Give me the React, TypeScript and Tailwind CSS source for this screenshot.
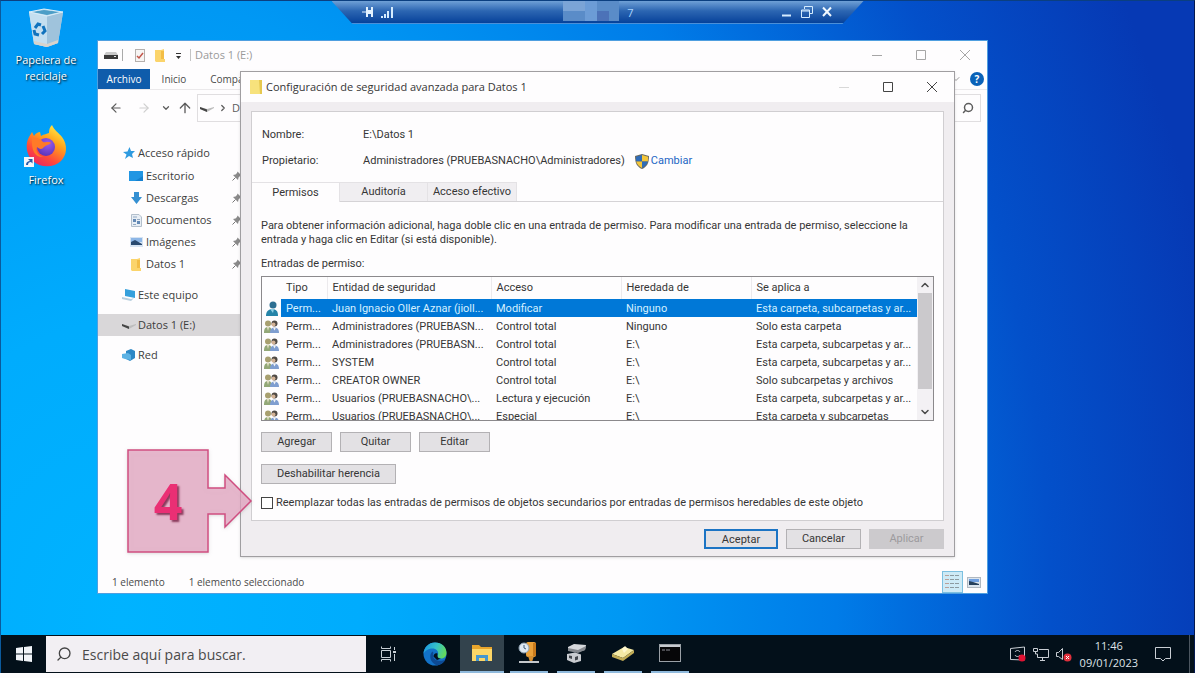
import type { ReactNode } from 'react';
import clsx from 'clsx';
import {
  ArrowLeft,
  ArrowRight,
  ArrowUp,
  ChevronDown,
  ChevronRight,
  ChevronUp,
  Search,
} from 'lucide-react';

const permissions = [
  { who: 'Juan Ignacio Oller Aznar (jioll...', access: 'Modificar', from: 'Ninguno', scope: 'Esta carpeta, subcarpetas y ar...', single: true },
  { who: 'Administradores (PRUEBASN...', access: 'Control total', from: 'Ninguno', scope: 'Solo esta carpeta' },
  { who: 'Administradores (PRUEBASN...', access: 'Control total', from: 'E:\\', scope: 'Esta carpeta, subcarpetas y ar...' },
  { who: 'SYSTEM', access: 'Control total', from: 'E:\\', scope: 'Esta carpeta, subcarpetas y ar...' },
  { who: 'CREATOR OWNER', access: 'Control total', from: 'E:\\', scope: 'Solo subcarpetas y archivos' },
  { who: 'Usuarios (PRUEBASNACHO\\...', access: 'Lectura y ejecución', from: 'E:\\', scope: 'Esta carpeta, subcarpetas y ar...' },
  { who: 'Usuarios (PRUEBASNACHO\\...', access: 'Especial', from: 'E:\\', scope: 'Esta carpeta y subcarpetas' },
];

/* ---------- Icons ---------- */

function RecycleBinIcon() {
  return (
    <svg width="38" height="40" viewBox="0 0 38 40">
      <path d="M2 4 L17 1 L36 4 L31 35 L20 39 L7 36 Z" fill="#b9d8ec" />
      <path d="M2 4 L20 8 L20 39 L7 36 Z" fill="#c4dff0" />
      <path d="M20 8 L36 4 L31 35 L20 39 Z" fill="#9fc3dc" />
      <path d="M7 33 L20 36 L31 32 L31 35 L20 39 L7 36 Z" fill="#d8d3cc" />
      <path d="M5 4 L17 2 L33 4 L20 7 Z" fill="#4c9ec7" />
      <path d="M2 4 L17 1 L36 4 L20 8 Z" fill="none" stroke="#d9edf8" />
      <g fill="none" stroke="#1173bd" strokeWidth="3">
        <path d="M8 20 L11 16 L14 17" />
        <path d="M16 18 L18 23 L15 26" />
        <path d="M12 27 L8 26 L7 22" />
      </g>
    </svg>
  );
}

function FirefoxIcon() {
  return (
    <svg width="44" height="44" viewBox="0 0 44 44">
      <defs>
        <linearGradient id="fox" x1="0.8" y1="0" x2="0.2" y2="1">
          <stop offset="0" stopColor="#fff04a" />
          <stop offset="0.35" stopColor="#ffa41c" />
          <stop offset="0.7" stopColor="#ff4a3a" />
          <stop offset="1" stopColor="#e8206a" />
        </linearGradient>
        <radialGradient id="globe" cx="0.6" cy="0.3" r="0.8">
          <stop offset="0" stopColor="#9a5cf0" />
          <stop offset="1" stopColor="#5430b4" />
        </radialGradient>
      </defs>
      <path
        d="M28 1 C30 6 35 9 38 13 C44 21 43 31 37 37 C30 44 16 44 9 37 C2 31 1 20 5 13 C6 11 7 10 8 8 L10 12 C12 9 14 8 16 8 L17 12 C20 10 23 10 25 9 C25 5 26 3 28 1 Z"
        fill="url(#fox)"
      />
      <circle cx="22" cy="23" r="9" fill="url(#globe)" />
      <path d="M8 14 C13 13 17 15 19 18 C22 19 25 17 27 19 C25 21 22 21 20 23 C18 26 15 25 13 23 C11 26 14 32 20 33 C12 34 7 28 8 14 Z" fill="#ff7a28" />
      <rect x="0" y="33" width="10" height="10" fill="#f4f6fa" />
      <path d="M2 41 C2 38 4 37 6 37 L4 35 L8.500 35 L8.500 39.500 L7 38 C5 38 4 39 4 41 Z" fill="#2a5ba8" />
    </svg>
  );
}

function DriveIcon() {
  return (
    <svg width="14" height="10" viewBox="0 0 14 10">
      <path d="M2 2 H12 L14 5 H0 Z" fill="#c9c9c9" />
      <rect y="5" width="14" height="4" fill="#3a3a3a" />
      <rect x="10" y="6" width="2" height="1" fill="#e8e8e8" />
    </svg>
  );
}

function SmallDriveIcon() {
  return (
    <svg width="14" height="8" viewBox="0 0 14 8">
      <path d="M0 3 L7 5 L14 3 L14 4 L7 8 L0 5 Z" fill="#bdbdbd" />
      <path d="M0 3 L7 5.500 L7 8 L0 5 Z" fill="#454545" />
    </svg>
  );
}

function FolderIcon({ className }: { className?: string }) {
  return (
    <svg width="10" height="13" viewBox="0 0 10 13" className={className}>
      <path d="M0 1 H6 L9 0 V10 H10 V13 H1 L0 12 Z" fill="#fbd46b" />
      <path d="M6 2 H9 V10 H6 Z" fill="#f3bd45" />
    </svg>
  );
}

function PinIcon() {
  return (
    <svg width="10" height="10" viewBox="0 0 10 10">
      <path d="M5.500 0.500 L9.500 4.500 L8 5 L6.500 6.500 L6 9 L1 4 L3.500 3.500 L5 2 Z" fill="#8a8a8a" />
      <path d="M3.500 6.500 L0.500 9.500" stroke="#777" />
    </svg>
  );
}

function UserIcon() {
  return (
    <svg width="12" height="15" viewBox="0 0 12 15">
      <circle cx="7" cy="4" r="3.500" fill="#2d6f92" />
      <path d="M0 15 C0 10 3 8 6 8 C10 8 12 10 12 15 Z" fill="#2584a8" />
      <path d="M4 8 L7 12 L8 8 Z" fill="#8fd0e6" />
    </svg>
  );
}

function GroupIcon() {
  return (
    <svg width="15" height="13" viewBox="0 0 15 13">
      <circle cx="4" cy="3.500" r="3" fill="#a8a070" />
      <path d="M0 13 C0 9 1 7 4 7 C7 7 8 9 8 13 Z" fill="#93a878" />
      <path d="M3 7 L4 11 L5 7 Z" fill="#efe6cf" />
      <circle cx="10.500" cy="3.500" r="3" fill="#4f4a45" />
      <circle cx="9.500" cy="4.500" r="2" fill="#d3b295" />
      <path d="M6 13 C6 9 8 7.500 10.500 7.500 C13 7.500 15 9 15 13 Z" fill="#7f9ed0" />
      <path d="M9 7.500 L10.500 10.500 L12 7.500 Z" fill="#f3f3f3" />
    </svg>
  );
}

function ShieldIcon() {
  return (
    <svg width="14" height="15" viewBox="0 0 14 15">
      <path d="M7 0 L14 2 C14 9 12 13 7 15 C2 13 0 9 0 2 Z" fill="#6a6a60" />
      <path d="M7 1 V7.500 H1.200 C1 6 1 4 1 2.800 Z" fill="#2f6cb8" />
      <path d="M7 1 L13 2.800 C13 4 13 6 12.800 7.500 H7 Z" fill="#f4c63a" />
      <path d="M1.200 7.500 H7 V14 C4 12.500 2 10.500 1.200 7.500 Z" fill="#f4c63a" />
      <path d="M7 7.500 H12.800 C12 10.500 10 12.500 7 14 Z" fill="#2f6cb8" />
    </svg>
  );
}

function EdgeIcon() {
  return (
    <svg width="24" height="24" viewBox="0 0 24 24">
      <defs>
        <linearGradient id="edgeTop" x1="0" y1="0.3" x2="1" y2="0.6">
          <stop offset="0" stopColor="#1c9ae0" />
          <stop offset="0.5" stopColor="#35c1c8" />
          <stop offset="1" stopColor="#66dc55" />
        </linearGradient>
      </defs>
      <circle cx="12" cy="12" r="11.500" fill="#1272c8" />
      <path d="M0.500 12 C1 5 6 0.500 12 0.500 C19 0.500 23.500 5 23.500 11 C23.500 15 20 17 17 16.500 C14 16 14 15 15 13 C16 9 13 6.500 9.500 6.500 C5 6.500 1.500 9 0.500 12 Z" fill="url(#edgeTop)" />
      <path d="M9.500 9.500 C6 12 6 20 13.500 23.300 C18 23 21 20.500 22.500 17.500 C18 20 11 19 10 14 C10 12 11 10 9.500 9.500 Z" fill="#0d4a94" />
      <path d="M14.500 11.500 C14 15 15 16.800 18 16.600 L14 18 L10.500 14.500 C10.500 12 12.500 10.500 14.500 11.500 Z" fill="#03111c" />
    </svg>
  );
}

function ExplorerIcon() {
  return (
    <svg width="22" height="18" viewBox="0 0 22 18">
      <path d="M1 1 H8 L10 3 H21 V17 H1 Z" fill="#e8a52c" />
      <path d="M1 5 H21 V17 H1 Z" fill="#fcd667" />
      <path d="M5 17 V11 H17 V17 H14 V14 H8 V17 Z" fill="#4597cf" />
    </svg>
  );
}

function DiskToolIcon() {
  return (
    <svg width="22" height="24" viewBox="0 0 22 24">
      <rect x="8" y="1" width="10" height="15" rx="2" fill="#eaa13a" />
      <rect x="15" y="2" width="3" height="13" fill="#c87a1c" />
      <path d="M10 15 H16 L14 21 H12 Z" fill="#d48e30" />
      <path d="M1 20 H21 V22 H1 Z" fill="#c4c8cc" />
      <circle cx="6" cy="7" r="5" fill="#dfe9f2" stroke="#8fa2b3" />
      <path d="M6 4 V7 L8 8" stroke="#3d5a78" fill="none" />
    </svg>
  );
}

function ServerIcon() {
  return (
    <svg width="22" height="20" viewBox="0 0 22 20">
      <path d="M3 4 L9 1 L21 2 L20 7 L13 9 L3 7 Z" fill="#d5d8dc" />
      <path d="M3 5 L13 7 L21 3 L20 7 L13 10 L3 8 Z" fill="#85898f" />
      <path d="M2 11 L10 9.500 L16 11.500 V18 L9 20 L2 17 Z" fill="#c9ccd1" />
      <path d="M4 12.500 L7 13 V16 L4 15 Z M10 14 L13 13 V16.500 L10 17.500 Z" fill="#42464c" />
    </svg>
  );
}

function BookIcon() {
  return (
    <svg width="24" height="16" viewBox="0 0 24 16">
      <path d="M1 9 L13 2 L23 5 L12 13 Z" fill="#f5eaa4" />
      <path d="M1 9 L12 13 L23 5 V8 L12 16 L1 12 Z" fill="#c2ad56" />
      <path d="M11 4 L14 1 L17 4 L13 8 Z" fill="#fff8cf" />
    </svg>
  );
}

function ConsoleIcon() {
  return (
    <svg width="22" height="18" viewBox="0 0 22 18">
      <rect x="0.500" y="0.500" width="21" height="17" fill="#060608" stroke="#9aa0a6" />
      <rect x="1" y="1" width="20" height="2" fill="#c6cacf" />
      <path d="M3 6 H6 M7 6 H11" stroke="#8d8d95" />
    </svg>
  );
}

function TaskViewIcon() {
  return (
    <svg width="17" height="16" viewBox="0 0 17 16" fill="none" stroke="#c9d0d6">
      <path d="M1.500 4.500 H10.500 V11.500 H1.500 Z M1.500 0.500 V2.500 H10.500 V0.500 M1.500 15.500 V13.500 H10.500 V15.500" />
      <path d="M14.500 1 V4 M14.500 8 V15" />
      <path d="M13 6 H16" strokeWidth="2" />
    </svg>
  );
}

/* ---------- Small building blocks ---------- */

function CaptionButtons({ active }: { active?: boolean }) {
  const stroke = active ? '#444' : '#a6a6a6';
  return (
    <div className="flex self-stretch">
      <button aria-label="Minimizar" className="flex w-11 items-center justify-center">
        <svg width="10" height="10" viewBox="0 0 10 10">
          <path d="M0 5.500 H10" stroke={active ? '#d8d8d8' : stroke} />
        </svg>
      </button>
      <button aria-label="Maximizar" className="flex w-11 items-center justify-center">
        <svg width="10" height="10" viewBox="0 0 10 10">
          <path d="M0.500 0.500 H9.500 V9.500 H0.500 Z" fill="none" stroke={stroke} />
        </svg>
      </button>
      <button aria-label="Cerrar" className="flex w-11 items-center justify-center">
        <svg width="10" height="10" viewBox="0 0 10 10">
          <path d="M0 0 L10 10 M10 0 L0 10" stroke={stroke} />
        </svg>
      </button>
    </div>
  );
}

function DialogButton({ children, className }: { children: ReactNode; className?: string }) {
  return (
    <button className={clsx('h-5 border border-[#b3b1b4] bg-[#e3e1e4] pt-px text-center', className)}>
      {children}
    </button>
  );
}

function NavItem({ icon, label, child, selected }: { icon: ReactNode; label: string; child?: boolean; selected?: boolean }) {
  return (
    <a
      href="#"
      className={clsx('flex h-[22px] items-center', child ? 'pl-7' : 'pl-[22px]', selected && 'bg-[#d9d7d9]')}
    >
      <span className={clsx('flex shrink-0 items-center justify-center', child ? 'w-[20px]' : 'w-[18px]')}>{icon}</span>
      <span className="flex-1 whitespace-nowrap">{label}</span>
      {child && <PinIcon />}
    </a>
  );
}

/* ---------- Remote desktop bar ---------- */

function ConnectionBar() {
  return (
    <div className="absolute top-0 left-1/2 flex h-[23px] w-[532px] -translate-x-1/2 items-center justify-between border-b border-[#4a8fd8] bg-linear-to-b from-[#6fa0d6] via-[#2c66b2] via-45% to-[#04419a] pr-[30px] pl-[30px] text-white [clip-path:polygon(0_0,100%_0,calc(100%-21px)_100%,21px_100%)]">
      <div className="flex w-[54px] items-center gap-2">
        <svg width="11" height="10" viewBox="0 0 11 10" fill="#e3f2ff">
          <path d="M0 4.500 H4 V5.500 H0 Z M4 0 H6 V3 H9 V0 H11 V10 H9 V7 H6 V10 H4 Z" />
        </svg>
        <svg width="13" height="11" viewBox="0 0 13 11" fill="#d5ecff">
          <path d="M0 9 H2 V11 H0 Z M3 7 H5 V11 H3 Z M6 4 H8 V11 H6 Z M10 0 H12 V11 H10 Z" />
        </svg>
      </div>
      <div className="flex h-full items-start gap-2">
        <svg width="56" height="20" viewBox="0 0 56 20">
          <rect width="56" height="20" fill="#5a8cc8" />
          <rect x="0" width="22" height="10" fill="#7ba4d6" />
          <rect x="22" width="12" height="20" fill="#6c9cd6" />
          <rect x="34" y="10" width="12" height="10" fill="#4c72b8" />
        </svg>
        <span className="text-[11px] leading-[23px] text-[#a9d4ff]">7</span>
      </div>
      <div className="flex items-center gap-2">
        <button aria-label="Minimizar conexión">
          <svg width="12" height="12" viewBox="0 0 12 12">
            <path d="M1 9.500 H10" stroke="#d5ecff" strokeWidth="2" />
          </svg>
        </button>
        <button aria-label="Restaurar conexión">
          <svg width="12" height="12" viewBox="0 0 12 12" fill="none" stroke="#d5ecff">
            <path d="M3.500 3 V0.500 H11.500 V7.500 H9" />
            <path d="M0.500 4 H8.500 V11.500 H0.500 Z M0.500 5 H8.500" />
          </svg>
        </button>
        <button aria-label="Cerrar conexión">
          <svg width="12" height="12" viewBox="0 0 12 12">
            <path d="M2 1.500 L10 10 M10 1.500 L2 10" stroke="#f0f8ff" strokeWidth="2" />
          </svg>
        </button>
      </div>
    </div>
  );
}

/* ---------- Explorer window ---------- */

function ExplorerWindow() {
  return (
    <section className="absolute top-[39px] left-[96px] flex h-[554px] w-[891px] flex-col border border-[#4f9fe0] bg-[#fefdfe] text-[11px]">
      <header className="flex h-7 items-center pl-1.5 text-[#9a9a9a]">
        <DriveIcon />
        <span className="mx-1 h-3 w-px bg-[#aaa]" />
        <svg width="10" height="13" viewBox="0 0 10 13" className="ml-2">
          <rect x="0.500" y="0.500" width="9" height="12" fill="#f7f5f4" stroke="#b5b0ad" />
          <path d="M2 7 L4 9 L8 4" fill="none" stroke="#c2554a" strokeWidth="1.500" />
        </svg>
        <FolderIcon className="ml-2.5" />
        <svg width="7" height="6" viewBox="0 0 7 6" className="mt-0.5 ml-2.5" fill="#333">
          <path d="M1 0 H6 V1 H1 Z M1 3 H6 L3.500 6 Z" />
        </svg>
        <span className="mx-2 h-3 w-px bg-[#c4c4c4]" />
        <h1 className="flex-1 -ml-1">Datos 1 (E:)</h1>
        <CaptionButtons />
      </header>

      <nav className="flex h-[21px] items-center border-b border-[#ebe9eb] text-[10px] text-[#4a4a4a]">
        <button className="h-full w-[52px] bg-[#0f5cab] text-white">Archivo</button>
        <button className="h-full w-12">Inicio</button>
        <button className="h-full w-[72px]">Compartir</button>
        <div className="flex flex-1 items-center justify-end gap-2 pr-[3px]">
          <ChevronDown className="size-3 text-[#9a9a9a]" />
          <button aria-label="Ayuda" className="size-3.5 rounded-full bg-[#0a62b8] text-center text-[10px] leading-3.5 font-bold text-white">
            ?
          </button>
        </div>
      </nav>

      <div className="flex h-9 items-center pr-1.5 pl-[11px] text-[#5c5c5c]">
        <button aria-label="Atrás"><ArrowLeft className="size-3.5" /></button>
        <button aria-label="Adelante" className="ml-3.5"><ArrowRight className="size-3.5 text-[#cfcfcf]" /></button>
        <button aria-label="Recientes" className="ml-2.5"><ChevronDown className="size-2.5" strokeWidth={3} /></button>
        <button aria-label="Subir" className="ml-1.5"><ArrowUp className="size-4" /></button>
        <div className="ml-1 flex h-7 flex-1 items-center gap-1 border border-[#e0dee0] pl-0.5">
          <SmallDriveIcon />
          <ChevronRight className="size-2.5" strokeWidth={3} />
          <span>Datos 1 (E:)</span>
        </div>
        <div className="ml-2 flex h-7 w-36 items-center justify-end border border-[#e0dee0] pr-1.5">
          <Search className="size-3 -scale-x-100" strokeWidth={3} />
        </div>
      </div>

      <aside className="mt-4 flex w-[144px] flex-1 flex-col gap-2 text-[#3d3d3d]">
        <div>
          <NavItem
            label="Acceso rápido"
            icon={
              <svg width="12" height="12" viewBox="0 0 12 12">
                <path d="M6.500 0 L8 4 L12 4 L9 7 L10 11 L6 9 L2 12 L3.500 7.500 L0 5 L4.500 4.500 Z" fill="#2f9be0" />
              </svg>
            }
          />
          <div className="py-px">
            <NavItem
              child
              label="Escritorio"
              icon={
                <svg width="14" height="10" viewBox="0 0 14 10">
                  <rect width="14" height="10" fill="#2196e3" />
                  <path d="M14 5 V10 H6 Z" fill="#1580cf" />
                </svg>
              }
            />
            <NavItem
              child
              label="Descargas"
              icon={
                <svg width="11" height="12" viewBox="0 0 11 12">
                  <path d="M3 0 H8 V5 H11 L5.500 12 L0 5 H3 Z" fill="#3590d2" />
                </svg>
              }
            />
            <NavItem
              child
              label="Documentos"
              icon={
                <svg width="11" height="13" viewBox="0 0 11 13">
                  <path d="M0.500 0.500 H8 L10.500 3 V12.500 H0.500 Z" fill="#e8eef5" stroke="#b3bfcc" />
                  <path d="M2 5 H5 V8 H2 Z M6 7 H9 V10 H6 Z" fill="#6489b5" />
                  <path d="M2 3 H6 M6 5.500 H9 M2 10.500 H5" stroke="#93a9c2" />
                </svg>
              }
            />
            <NavItem
              child
              label="Imágenes"
              icon={
                <svg width="13" height="10" viewBox="0 0 13 10">
                  <rect width="13" height="10" fill="#d6e3f2" />
                  <rect x="1" y="1" width="11" height="4" fill="#8db6e6" />
                  <path d="M1 5 L5 3 L12 7 V8 H1 Z" fill="#29496f" />
                </svg>
              }
            />
            <NavItem child label="Datos 1" icon={<FolderIcon />} />
          </div>
        </div>
        <NavItem
          label="Este equipo"
          icon={
            <svg width="14" height="12" viewBox="0 0 14 12">
              <path d="M3 0 L13 2 V9 L3 7 Z" fill="#35a0dc" />
              <path d="M0 8 L9 10 L12 9 L9 12 L0 10 Z" fill="#b8cfdf" />
            </svg>
          }
        />
        <NavItem selected label="Datos 1 (E:)" icon={<SmallDriveIcon />} />
        <NavItem
          label="Red"
          icon={
            <svg width="14" height="13" viewBox="0 0 14 13">
              <path d="M4 2 L9 0 L13 2 V9 L8 12 L4 10 Z" fill="#2c88c6" />
              <path d="M0 5 L6 4 L9 6 V11 L3 10 L0 9 Z" fill="#5cb2e4" />
            </svg>
          }
        />
      </aside>

      <footer className="flex h-[22px] items-center gap-6 pl-3.5 text-[10px] text-[#4a4a4a]">
        <span>1 elemento</span>
        <span className="flex-1">1 elemento seleccionado</span>
        <div className="flex items-center gap-1 self-stretch pr-1.5">
          <button aria-label="Detalles" className="flex h-[22px] w-[21px] items-center justify-center border border-[#7cc0e0] bg-[#cdeaf6]">
            <svg width="15" height="16" viewBox="0 0 15 16" stroke="#8c9aa0">
              <path d="M0 1.500 H4 M0 5.500 H4 M0 9.500 H4 M0 13.500 H4" stroke="#b9a09a" />
              <path d="M5 1.500 H9 M5 5.500 H9 M5 9.500 H9 M5 13.500 H9 M10 1.500 H14 M10 5.500 H14 M10 9.500 H14 M10 13.500 H14" />
            </svg>
          </button>
          <button aria-label="Iconos grandes">
            <svg width="14" height="11" viewBox="0 0 14 11">
              <rect x="0.500" y="0.500" width="13" height="10" fill="#dce5ee" stroke="#b0b8c0" />
              <rect x="2" y="2" width="10" height="3" fill="#6f9fe0" />
              <path d="M2 4 L6 5 L12 7 V8 H2 Z" fill="#26405c" />
            </svg>
          </button>
        </div>
      </footer>
    </section>
  );
}

/* ---------- Advanced security dialog ---------- */

function SecurityDialog() {
  return (
    <section
      role="dialog"
      aria-labelledby="dialog-title"
      className="absolute top-[70px] left-[239px] flex h-[486px] w-[715px] flex-col border border-[#a09ea1] bg-[#f0edf0] font-[Roboto,'Open_Sans',sans-serif] text-[11px] text-[#363636] shadow-sm"
    >
      <header className="flex h-[30px] items-center bg-[#fefdfe] pl-[9px]">
        <svg width="12" height="14" viewBox="0 0 12 14">
          <rect width="12" height="14" fill="#f7e27c" />
          <path d="M9 0 H12 V14 H10 Z" fill="#e6c84f" />
        </svg>
        <h2 id="dialog-title" className="flex-1 pl-1 font-['Open_Sans','Noto_Sans',sans-serif]">Configuración de seguridad avanzada para Datos 1</h2>
        <CaptionButtons active />
      </header>

      <div className="mx-2.5 mt-[9px] flex flex-1 flex-col border border-[#d0ced1] bg-[#fefdfe]">
        <dl className="grid grid-cols-[101px_1fr] gap-y-[10px] px-2.5 pt-[15px] leading-4">
          <dt>Nombre:</dt>
          <dd>E:\Datos 1</dd>
          <dt>Propietario:</dt>
          <dd className="flex items-center">
            Administradores (PRUEBASNACHO\Administradores)
            <a href="#" className="ml-2.5 flex items-center gap-0.5 text-[#2366c4]">
              <ShieldIcon />
              Cambiar
            </a>
          </dd>
        </dl>

        <div role="tablist" className="mt-[13px] flex h-5 border-b border-[#d5d3d6]">
          <button role="tab" aria-selected="true" className="-mb-px w-[88px] border-t border-r border-[#e4e2e5] bg-[#fefdfe] pt-px">
            Permisos
          </button>
          <button role="tab" aria-selected="false" className="w-[88px] border-t border-r border-[#e4e2e5] bg-[#f0eef1] pt-px">
            Auditoría
          </button>
          <button role="tab" aria-selected="false" className="w-[89px] border-t border-r border-[#e4e2e5] bg-[#f0eef1] pt-px">
            Acceso efectivo
          </button>
        </div>

        <div className="flex flex-col px-[9px]">
          <p className="mt-[17px] leading-[14px]">
            Para obtener información adicional, haga doble clic en una entrada de permiso. Para modificar una entrada de permiso, seleccione la
            entrada y haga clic en Editar (si está disponible).
          </p>
          <p className="mt-2.5 leading-[14px]">Entradas de permiso:</p>

          <div className="mt-[5px] flex h-[145px] overflow-hidden border border-[#8b898c]">
            <table className="flex-1 table-fixed border-collapse self-start text-left whitespace-nowrap">
              <colgroup>
                <col className="w-[19px]" />
                <col className="w-[46px]" />
                <col className="w-[164px]" />
                <col className="w-[130px]" />
                <col className="w-[130px]" />
                <col />
              </colgroup>
              <thead>
                <tr className="h-[22px]">
                  <th aria-label="Icono" />
                  {['Tipo', 'Entidad de seguridad', 'Acceso', 'Heredada de', 'Se aplica a'].map((head) => (
                    <th key={head} className="border-r border-[#eceaed] p-0 pt-px pl-[5px] font-normal last:border-r-0">{head}</th>
                  ))}
                </tr>
              </thead>
              <tbody>
                {permissions.map((row, idx) => (
                  <tr key={idx} className="h-[18px] leading-[17px]">
                    <td className="p-0 pl-0.5">
                      {row.single ? <span className="flex pl-0.5"><UserIcon /></span> : <GroupIcon />}
                    </td>
                    {['Perm...', row.who, row.access, row.from, row.scope].map((text, cell) => (
                      <td key={cell} className={clsx('p-0 pt-px pl-[5px]', idx === 0 && 'bg-[#0078d7] text-[#d5f0ff]')}>{text}</td>
                    ))}
                  </tr>
                ))}
              </tbody>
            </table>
            <div className="flex w-4 flex-col items-center bg-[#f3f1f4] text-[#4a4a4a]">
              <ChevronUp className="my-0.5 size-3" strokeWidth={3} />
              <div className="h-[96px] w-3.5 bg-[#cbc9cc]" />
              <ChevronDown className="mt-auto mb-0.5 size-3" strokeWidth={3} />
            </div>
          </div>

          <div className="mt-[11px] flex gap-2">
            <DialogButton className="w-[71px]">Agregar</DialogButton>
            <DialogButton className="w-[71px]">Quitar</DialogButton>
            <DialogButton className="w-[71px]">Editar</DialogButton>
          </div>
          <DialogButton className="mt-3 w-[135px]">Deshabilitar herencia</DialogButton>
          <label className="mt-[11px] flex items-center gap-[3px] leading-4">
            <input type="checkbox" className="size-3 appearance-none border border-[#444] bg-white" />
            Reemplazar todas las entradas de permisos de objetos secundarios por entradas de permisos heredables de este objeto
          </label>
        </div>
      </div>

      <footer className="flex h-[35px] items-center justify-end gap-2 px-2.5">
        <button className="h-5 w-[74px] border-2 border-[#1c74c4] bg-[#e3e1e4] pt-px leading-4">Aceptar</button>
        <DialogButton className="w-[75px]">Cancelar</DialogButton>
        <button disabled className="h-5 w-[75px] bg-[#cccacd] pt-px text-[#9c9a9d]">Aplicar</button>
      </footer>
    </section>
  );
}

function StepCallout() {
  return (
    <div className="absolute top-[448px] left-[126px] flex h-[104px] w-[124px] items-center">
      <svg width="126" height="108" viewBox="0 0 126 108" className="absolute top-0 left-0 drop-shadow">
        <path
          d="M1 1 H81 V39 H98 V26 L124 52 L98 78 V65 H81 V103 H1 Z"
          fill="#e4a6c1"
          fillOpacity="0.75"
          stroke="#cf4d80"
          strokeWidth="1.500"
        />
      </svg>
      <span className="relative w-[82px] text-center text-[50px] font-bold text-[#ea2f74] [text-shadow:2px_2px_2px_#8b3a5c]">4</span>
    </div>
  );
}

/* ---------- Taskbar ---------- */

const tasks = [
  { name: 'Vista de tareas', icon: <TaskViewIcon /> },
  { name: 'Microsoft Edge', icon: <EdgeIcon /> },
  { name: 'Explorador de archivos', icon: <ExplorerIcon />, open: true, active: true },
  { name: 'Administración de equipos', icon: <DiskToolIcon />, open: true },
  { name: 'Administrador del servidor', icon: <ServerIcon />, open: true },
  { name: 'Usuarios y equipos', icon: <BookIcon />, open: true },
  { name: 'Símbolo del sistema', icon: <ConsoleIcon />, open: true },
];

function Taskbar() {
  return (
    <footer className="flex h-[38px] shrink-0 items-stretch bg-[#03101a] text-[11px] text-[#dfe3e8]">
      <button aria-label="Inicio" className="flex w-[45px] items-center justify-center">
        <svg width="16" height="16" viewBox="0 0 16 16" fill="#f0f4f8">
          <path d="M0 2 L7 1 V7.500 H0 Z M8 1 L16 0 V7.500 H8 Z M0 8.500 H7 V15 L0 14 Z M8 8.500 H16 V16 L8 15 Z" />
        </svg>
      </button>
      <label className="my-px flex w-80 items-center gap-2.5 bg-[#f2eff3] pl-2.5 text-[#444]">
        <Search className="size-4 -scale-x-100" strokeWidth={2} />
        <input
          type="text"
          aria-label="Buscar"
          placeholder="Escribe aquí para buscar."
          className="min-w-0 flex-1 text-[14px] outline-none placeholder:text-[#4a4a4a]"
        />
      </label>
      <div className="flex gap-[3px]">
        {tasks.map((task) => (
          <button
            key={task.name}
            aria-label={task.name}
            className={clsx('flex w-11 flex-col items-center', task.active && 'bg-[#33434d]')}
          >
            <span className="flex flex-1 items-center">{task.icon}</span>
            {task.open && <span className={clsx('h-0.5 bg-[#8fb9dc]', task.active ? 'w-full' : 'w-[38px]')} />}
          </button>
        ))}
      </div>
      <div className="ml-auto flex items-center">
        <div className="flex items-center gap-[7px]">
          <svg width="16" height="16" viewBox="0 0 16 16" fill="none" stroke="#c9ced4">
            <path d="M0.500 2.500 L14.500 1 V14 L0.500 13.500 Z" />
            <path d="M5 6 C6 4 9 4 10 6 M10 9 C9 11 6 11 5 9" />
            <circle cx="12" cy="12" r="3.500" fill="#e01232" stroke="none" />
          </svg>
          <svg width="16" height="14" viewBox="0 0 16 14" fill="none" stroke="#c9ced4">
            <path d="M6 2.500 H15.500 V10.500 H4.500 V7 M7 13.500 H12 M9.500 10.500 V13" />
            <path d="M0.500 1.500 H4.500 V4.500 H0.500 Z M2.500 4.500 V7 H4.500" />
          </svg>
          <svg width="16" height="15" viewBox="0 0 16 15" fill="none">
            <path d="M0.500 5.500 H2.500 L6.500 1.500 V12.500 L2.500 9.500 H0.500 Z" stroke="#c9ced4" />
            <circle cx="11.500" cy="10.500" r="4" fill="#e0303c" />
            <path d="M10 9 L13 12 M13 9 L10 12" stroke="#fff" />
          </svg>
        </div>
        <time className="mr-[17px] ml-2 text-center leading-[17px]">
          11:46
          <br />
          09/01/2023
        </time>
        <button aria-label="Notificaciones">
          <svg width="16" height="16" viewBox="0 0 16 16" fill="none" stroke="#c9ced4">
            <path d="M0.500 1.500 H15.500 V12.500 H10.500 L8 15 L5.500 12.500 H0.500 Z" />
          </svg>
        </button>
        <span className="mr-1 ml-[18px] h-full w-px bg-[#4c5660]" />
      </div>
    </footer>
  );
}

export default function App() {
  return (
    <div className="h-screen bg-[#fdfcfd] pr-[5px] pb-[5px] font-['Open_Sans','Noto_Sans',sans-serif]">
      <div className="relative flex h-full flex-col border-t border-r border-l border-t-[#0b3f80] border-r-[#03174f] border-l-[#0b5a9c] bg-[radial-gradient(ellipse_100%_220%_at_10%_92%,#00b3ff_0%,#00acfd_20%,#0098f4_42%,#007ce8_60%,#0350ca_78%,#0639b4_94%)]">
        <main className="flex-1 pt-[7px]">
          <div className="flex w-[90px] flex-col items-center text-center text-[11px] leading-4 text-white [text-shadow:1px_1px_2px_#000]">
            <a href="#" className="flex flex-col items-center gap-1">
              <RecycleBinIcon />
              Papelera de reciclaje
            </a>
            <a href="#" className="mt-10 flex flex-col items-center gap-1">
              <FirefoxIcon />
              Firefox
            </a>
          </div>
        </main>
        <ConnectionBar />
        <ExplorerWindow />
        <SecurityDialog />
        <StepCallout />
        <Taskbar />
      </div>
    </div>
  );
}
